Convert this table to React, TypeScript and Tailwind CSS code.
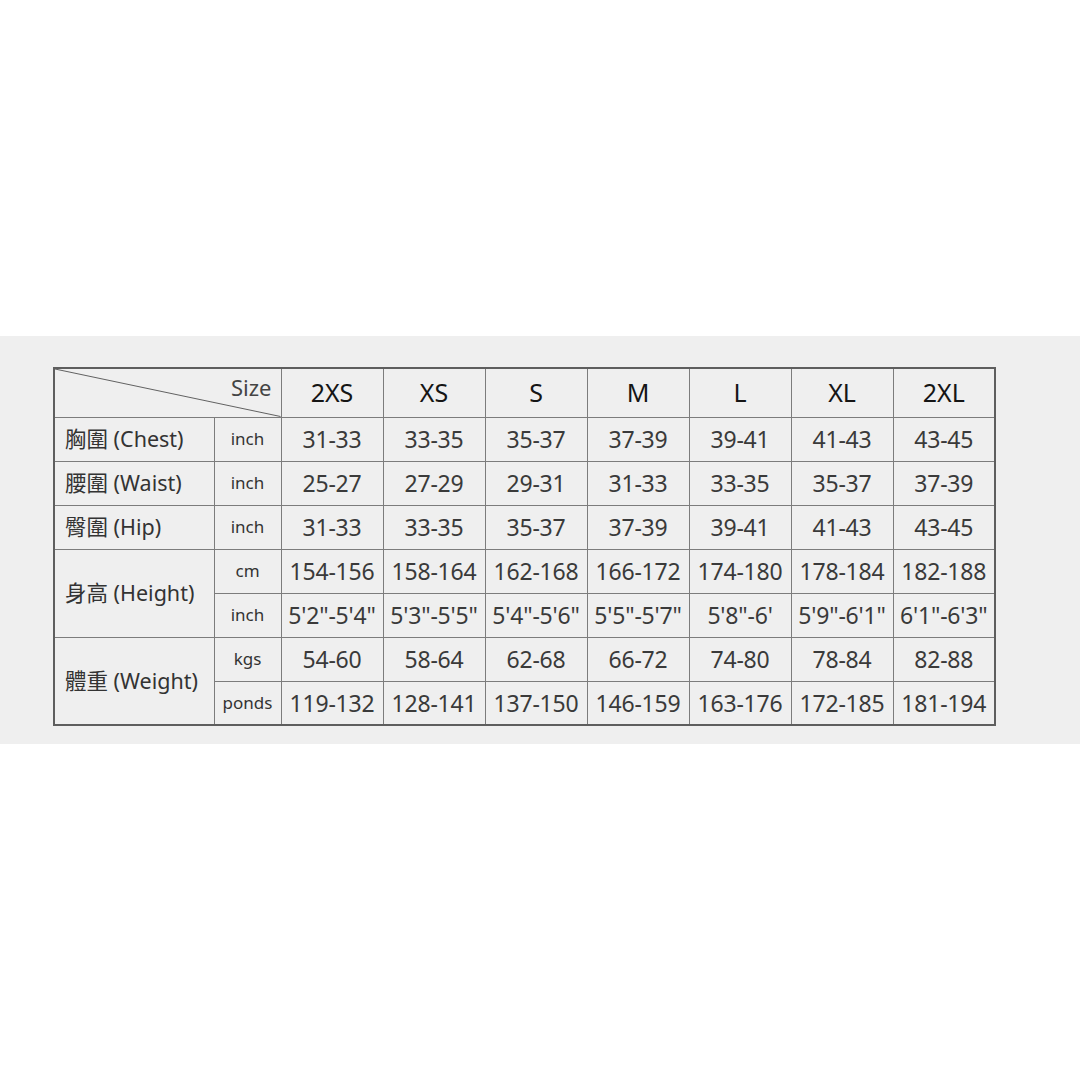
const sizes = ["2XS", "XS", "S", "M", "L", "XL", "2XL"];

type Row = { label?: string; span?: number; unit: string; values: string[] };

const rows: Row[] = [
  { label: "胸圍 (Chest)", unit: "inch", values: ["31-33", "33-35", "35-37", "37-39", "39-41", "41-43", "43-45"] },
  { label: "腰圍 (Waist)", unit: "inch", values: ["25-27", "27-29", "29-31", "31-33", "33-35", "35-37", "37-39"] },
  { label: "臀圍 (Hip)", unit: "inch", values: ["31-33", "33-35", "35-37", "37-39", "39-41", "41-43", "43-45"] },
  { label: "身高 (Height)", span: 2, unit: "cm", values: ["154-156", "158-164", "162-168", "166-172", "174-180", "178-184", "182-188"] },
  { unit: "inch", values: [`5'2"-5'4"`, `5'3"-5'5"`, `5'4"-5'6"`, `5'5"-5'7"`, `5'8"-6'`, `5'9"-6'1"`, `6'1"-6'3"`] },
  { label: "體重 (Weight)", span: 2, unit: "kgs", values: ["54-60", "58-64", "62-68", "66-72", "74-80", "78-84", "82-88"] },
  { unit: "ponds", values: ["119-132", "128-141", "137-150", "146-159", "163-176", "172-185", "181-194"] },
];

const cell = "border border-[#7c7c7c] p-0";

export default function App() {
  return (
    <div className="w-[1080px] h-[1080px] bg-white font-['Noto_Sans','Noto_Sans_CJK_TC',sans-serif]">
      <div className="h-[336px]" />
      <div className="h-[408px] bg-[#efefef] pt-[31px] pl-[53px]">
        <table className="table-fixed border-collapse border-2 border-[#5e5e5e] w-[943px] text-[#333]">
          <colgroup>
            <col className="w-[160px]" />
            <col className="w-[67px]" />
            {sizes.map((s) => (
              <col key={s} className="w-[102px]" />
            ))}
          </colgroup>
          <thead>
            <tr className="h-[49px]">
              <th colSpan={2} className={`${cell} relative font-normal`}>
                <svg className="absolute inset-0 w-full h-full" viewBox="0 0 227 49" preserveAspectRatio="none">
                  <line x1="0" y1="0" x2="227" y2="49" stroke="#5e5e5e" strokeWidth="1" />
                </svg>
                <div className="text-right pr-[9px] -mt-[11px] text-[22px] text-[#444]">Size</div>
              </th>
              {sizes.map((s) => (
                <th key={s} className={`${cell} font-normal text-[25px] text-[#151515]`}>
                  {s}
                </th>
              ))}
            </tr>
          </thead>
          <tbody>
            {rows.map((r, i) => (
              <tr key={i} className="h-[44px]">
                {r.label && (
                  <td rowSpan={r.span ?? 1} className={`${cell} text-left pl-[10px] text-[21.5px] text-[#333] whitespace-nowrap`}>
                    {r.label}
                  </td>
                )}
                <td className={`${cell} text-center text-[17px] text-[#333]`}>{r.unit}</td>
                {r.values.map((v, j) => (
                  <td key={j} className={`${cell} text-center text-[23px] text-[#3a3a3a] whitespace-nowrap tracking-[-0.2px]`}>
                    {v}
                  </td>
                ))}
              </tr>
            ))}
          </tbody>
        </table>
      </div>
    </div>
  );
}
